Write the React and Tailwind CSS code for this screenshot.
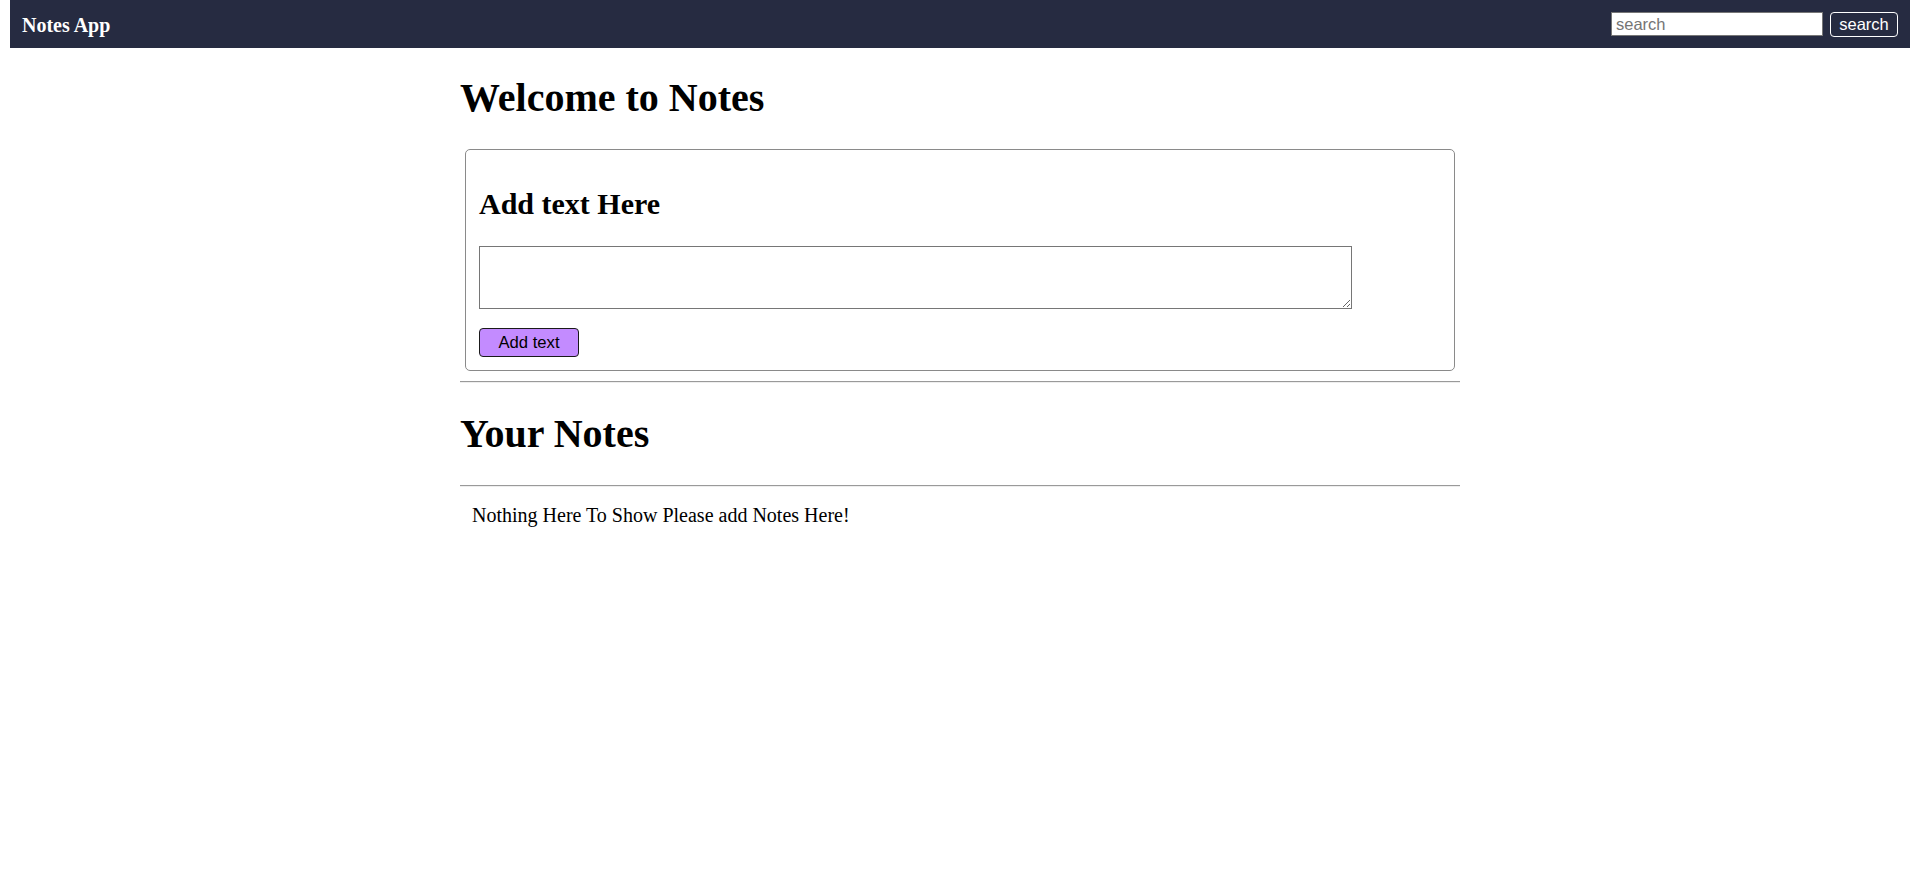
export default function App() {
  return (
    <div className="min-h-[878px] bg-white text-black font-['Liberation_Serif','Times_New_Roman',serif]">
      <nav className="mx-[10px] h-[48px] bg-[#262b41] flex items-center justify-between pl-[12px] pr-[12px]">
        <span className="text-white font-bold text-[20px] leading-[23px] mt-[3px]">Notes App</span>
        <div className="flex items-center gap-[7px] font-['Liberation_Sans',Arial,sans-serif]">
          <input
            type="text"
            placeholder="search"
            className="w-[212px] h-[24px] bg-white border border-[#767676] px-[4px] text-[16.5px] text-black placeholder:text-[#757575] outline-none"
          />
          <button className="w-[68px] h-[25px] border border-white rounded-[4px] text-white text-[16.5px] leading-[20px] bg-transparent">
            search
          </button>
        </div>
      </nav>

      <main className="w-[1000px] mx-auto">
        <h1 className="text-[40px] leading-[46px] font-bold mt-[27px] mb-[28px]">Welcome to Notes</h1>

        <div className="mx-[5px] border border-[#8a8a8a] rounded-[5px] pt-[12px] pb-[13px] pl-[13px] pr-[13px]">
          <h2 className="text-[30px] leading-[34px] font-bold mt-[25px] mb-[25px]">Add text Here</h2>
          <textarea className="block w-[873px] h-[63px] border border-[#767676] p-[2px] font-['Liberation_Mono',monospace] text-[16px] outline-none"></textarea>
          <button className="block mt-[19px] w-[100px] h-[29px] bg-[#c38bff] border border-[#1a1a1a] rounded-[4px] text-[16.67px] leading-[20px] text-black font-['Liberation_Sans',Arial,sans-serif]">
            Add text
          </button>
        </div>

        <div className="mt-[10px] border-t border-t-[#9a9a9a] border-b border-b-[#eeeeee]"></div>

        <h1 className="text-[40px] leading-[46px] font-bold mt-[28px] mb-[28px]">Your Notes</h1>

        <div className="border-t border-t-[#9a9a9a] border-b border-b-[#eeeeee]"></div>

        <p className="mt-[17px] pl-[12px] text-[20px] leading-[23px]">Nothing Here To Show Please add Notes Here!</p>
      </main>
    </div>
  );
}
